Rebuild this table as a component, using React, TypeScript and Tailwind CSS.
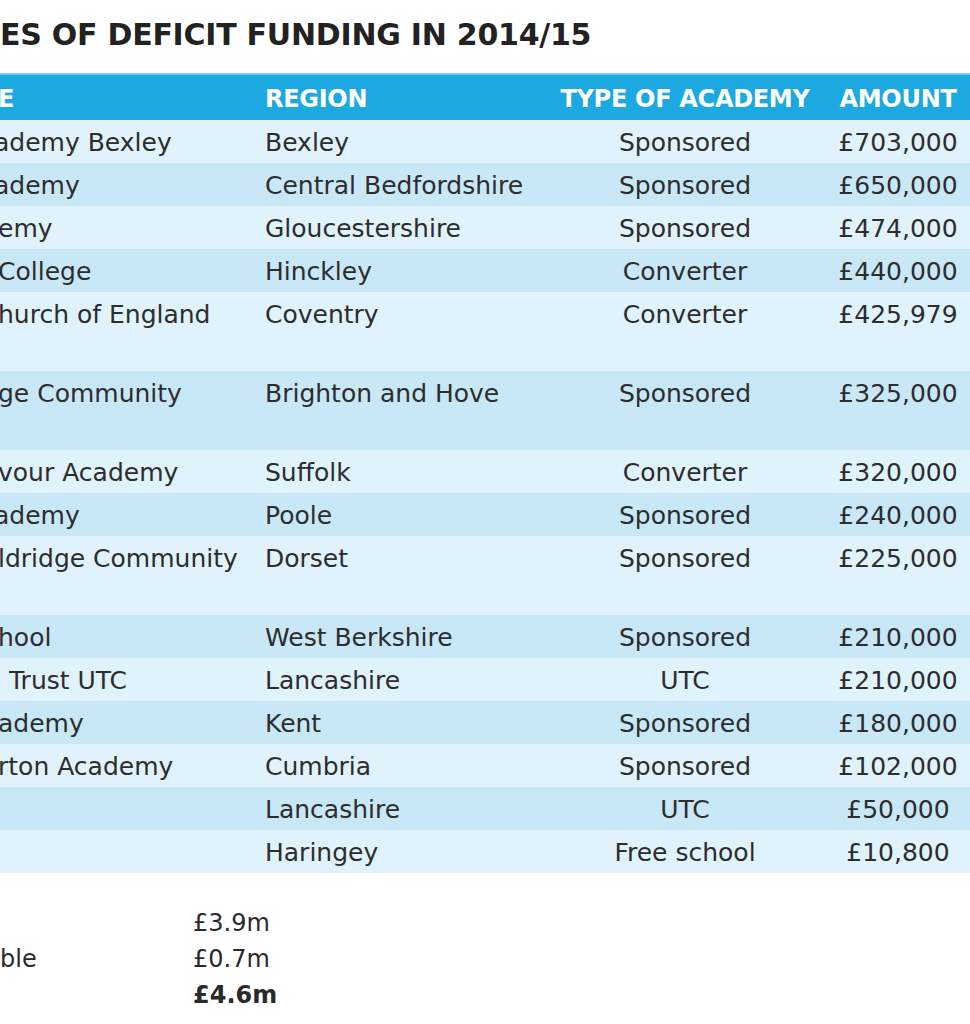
type Row = {
  name: string;
  region: string;
  type: string;
  amount: string;
  tall?: boolean;
  shift?: string;
};

const rows: Row[] = [
  { name: "ademy Bexley", region: "Bexley", type: "Sponsored", amount: "£703,000", shift: "-ml-[6px]" },
  { name: "ademy", region: "Central Bedfordshire", type: "Sponsored", amount: "£650,000", shift: "-ml-[6px]" },
  { name: "emy", region: "Gloucestershire", type: "Sponsored", amount: "£474,000" },
  { name: "College", region: "Hinckley", type: "Converter", amount: "£440,000" },
  { name: "hurch of England", region: "Coventry", type: "Converter", amount: "£425,979", tall: true },
  { name: "ge Community", region: "Brighton and Hove", type: "Sponsored", amount: "£325,000", tall: true },
  { name: "vour Academy", region: "Suffolk", type: "Converter", amount: "£320,000" },
  { name: "ademy", region: "Poole", type: "Sponsored", amount: "£240,000", shift: "-ml-[6px]" },
  { name: "ldridge Community", region: "Dorset", type: "Sponsored", amount: "£225,000" , tall: true },
  { name: "hool", region: "West Berkshire", type: "Sponsored", amount: "£210,000" },
  { name: "Trust UTC", region: "Lancashire", type: "UTC", amount: "£210,000", shift: "ml-[9px]" },
  { name: "ademy", region: "Kent", type: "Sponsored", amount: "£180,000" },
  { name: "rton Academy", region: "Cumbria", type: "Sponsored", amount: "£102,000" },
  { name: "", region: "Lancashire", type: "UTC", amount: "£50,000" },
  { name: "", region: "Haringey", type: "Free school", amount: "£10,800" },
];

const totals = [
  { label: "", value: "£3.9m", bold: false },
  { label: "ble", value: "£0.7m", bold: false },
  { label: "", value: "£4.6m", bold: true },
];

export default function App() {
  return (
    <div className="w-[970px] h-[1024px] overflow-hidden bg-white text-[#2d2d2d] font-['DejaVu_Sans',sans-serif]">
      <h1 className="pt-[17px] text-[30px] leading-[36px] font-bold tracking-[-0.25px] text-[#222] whitespace-nowrap">
        ES OF DEFICIT FUNDING IN 2014/15
      </h1>

      <div className="mt-[20px] w-[984px]">
        <div className="grid grid-cols-[262px_296px_254px_172px] h-[47px] items-center border-t-2 border-[#74cdf0] bg-[#1ca9e1] text-white text-[24px] font-bold tracking-[-0.3px] pt-[3px] whitespace-nowrap">
          <span className="-ml-[2px]">E</span>
          <span className="pl-[3px]">REGION</span>
          <span className="text-center">TYPE OF ACADEMY</span>
          <span className="text-center">AMOUNT</span>
        </div>

        {rows.map((r, i) => (
          <div
            key={i}
            className={`grid grid-cols-[262px_296px_254px_172px] items-start pt-[4px] text-[25px] leading-[37px] whitespace-nowrap ${
              r.tall ? "h-[79px]" : "h-[43px]"
            } ${i % 2 === 0 ? "bg-[#e0f2fc]" : "bg-[#c8e8f8]"}`}
          >
            <span className={`overflow-hidden ${r.shift ?? "-ml-[2px]"}`}>{r.name}</span>
            <span className="pl-[3px]">{r.region}</span>
            <span className="text-center">{r.type}</span>
            <span className="text-center">{r.amount}</span>
          </div>
        ))}
      </div>

      <div className="mt-[32px] grid grid-cols-[193px_auto] text-[24px] leading-[36px] text-[#2a2a2a]">
        {totals.map((t, i) => (
          <div key={i} className="contents">
            <span>{t.label}</span>
            <span className={t.bold ? "font-bold" : ""}>{t.value}</span>
          </div>
        ))}
      </div>
    </div>
  );
}
